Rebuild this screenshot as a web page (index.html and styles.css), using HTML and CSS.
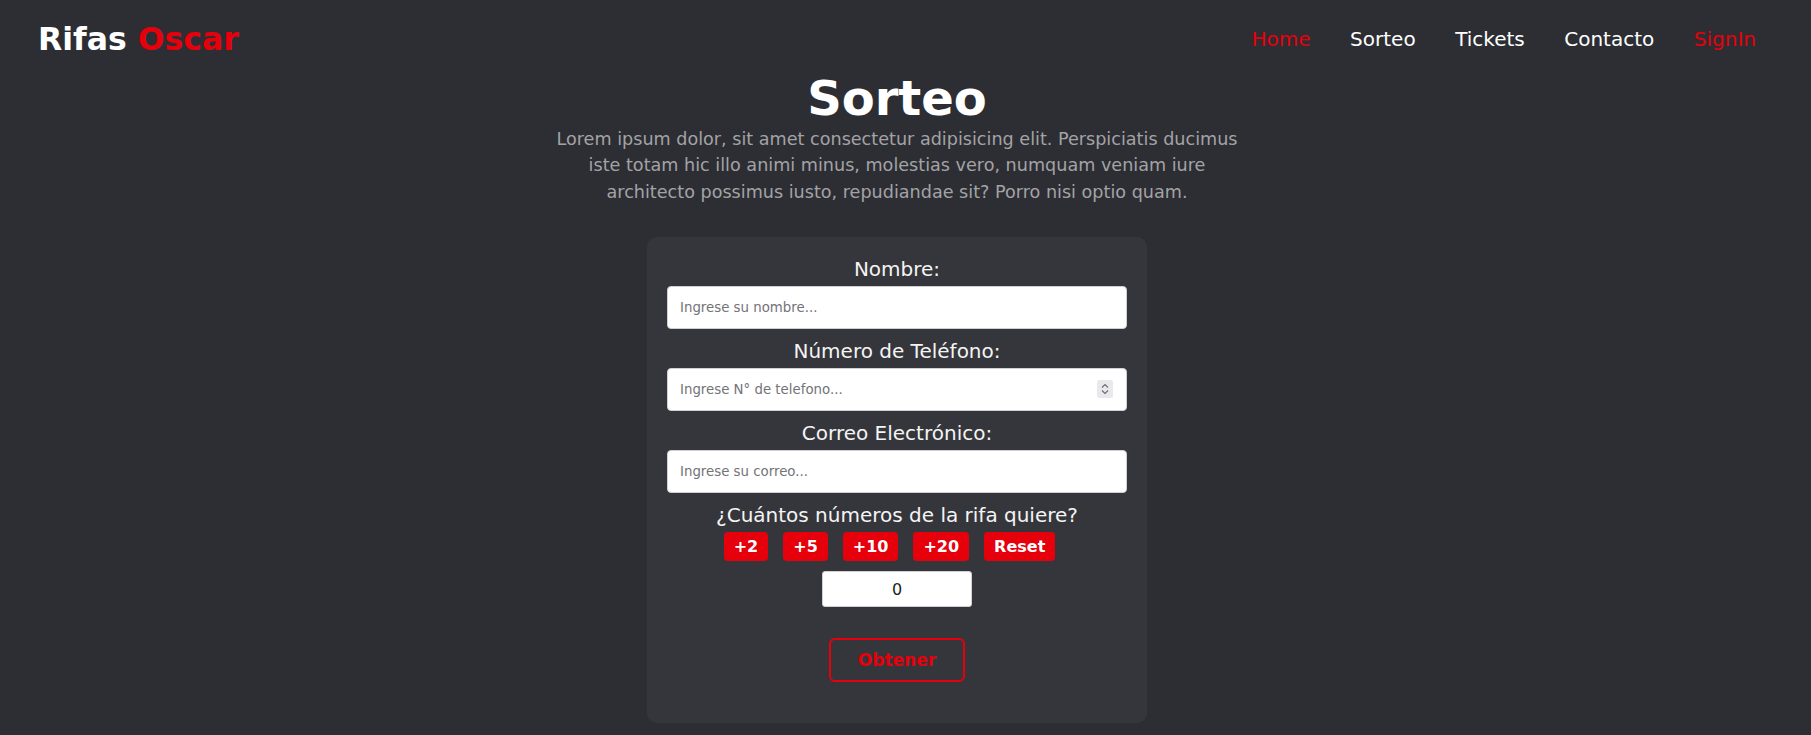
FILE: index.html
```html
<!DOCTYPE html>
<html lang="es">
<head>
<meta charset="utf-8">
<title>Rifas Oscar - Sorteo</title>
<link rel="stylesheet" href="styles.css">
</head>
<body>
<header class="topbar">
  <div class="logo">Rifas <span class="red">Oscar</span></div>
  <nav class="nav">
    <a class="nav-link active" href="#">Home</a>
    <a class="nav-link" href="#">Sorteo</a>
    <a class="nav-link" href="#">Tickets</a>
    <a class="nav-link" href="#">Contacto</a>
    <a class="nav-link active" href="#">SignIn</a>
  </nav>
</header>
<main class="main">
  <h1 class="title">Sorteo</h1>
  <p class="intro">Lorem ipsum dolor, sit amet consectetur adipisicing elit. Perspiciatis ducimus iste totam hic illo animi minus, molestias vero, numquam veniam iure architecto possimus iusto, repudiandae sit? Porro nisi optio quam.</p>
  <form class="card">
    <div class="field">
      <label class="label" for="nombre">Nombre:</label>
      <input class="input" id="nombre" type="text" placeholder="Ingrese su nombre...">
    </div>
    <div class="field">
      <label class="label" for="tel">Número de Teléfono:</label>
      <div class="input-wrap">
        <input class="input" id="tel" type="text" placeholder="Ingrese N° de telefono...">
        <span class="spinner"><svg width="16" height="18" viewBox="0 0 16 18"><path d="M5 7.5 L8 4.5 L11 7.5" fill="none" stroke="#6b6b73" stroke-width="1.1"/><path d="M5 10.5 L8 13.5 L11 10.5" fill="none" stroke="#6b6b73" stroke-width="1.1"/></svg></span>
      </div>
    </div>
    <div class="field">
      <label class="label" for="correo">Correo Electrónico:</label>
      <input class="input" id="correo" type="text" placeholder="Ingrese su correo...">
    </div>
    <div class="field">
      <div class="label">¿Cuántos números de la rifa quiere?</div>
      <div class="btn-row">
        <button type="button" class="btn-add">+2</button>
        <button type="button" class="btn-add">+5</button>
        <button type="button" class="btn-add">+10</button>
        <button type="button" class="btn-add">+20</button>
        <button type="button" class="btn-add">Reset</button>
      </div>
      <input class="count" type="text" value="0">
    </div>
    <button type="button" class="btn-get">Obtener</button>
  </form>
</main>
</body>
</html>
```
FILE: styles.css
```css
* { box-sizing: border-box; }
html, body {
  margin: 0;
  background: #2d2e33;
  font-family: "DejaVu Sans", Verdana, sans-serif;
  color: #ffffff;
}
.red { color: #e6000c; }
.topbar {
  display: flex;
  align-items: center;
  justify-content: space-between;
  padding: 21px 55px 0 38px;
}
.logo {
  font-size: 31.5px;
  font-weight: bold;
  color: #ffffff;
}
.nav {
  display: flex;
  gap: 39.5px;
}
.nav-link {
  font-size: 20px;
  color: #ffffff;
  text-decoration: none;
}
.nav-link.active { color: #e6000c; }
.main {
  display: flex;
  flex-direction: column;
  align-items: center;
  padding-right: 17px;
}
.title {
  margin: 13px 0 0;
  font-size: 48px;
  font-weight: bold;
  line-height: 56px;
}
.intro {
  margin: 0;
  max-width: 700px;
  text-align: center;
  font-size: 17.6px;
  line-height: 1.5;
  color: #a3a3a6;
}
.card {
  margin-top: 32px;
  width: 500px;
  background: #35363b;
  border-radius: 10px;
  padding: 21px 20px 41px;
  display: flex;
  flex-direction: column;
  align-items: center;
  gap: 11px;
}
.field {
  width: 100%;
  display: flex;
  flex-direction: column;
  align-items: center;
}
.label {
  font-size: 20px;
  line-height: 23px;
  color: #f4f4f4;
  margin-bottom: 5px;
}
.input-wrap {
  position: relative;
  width: 100%;
}
.input {
  width: 100%;
  height: 43px;
  border: 1px solid #d0d0d4;
  border-radius: 4px;
  background: #ffffff;
  padding: 0 12px;
  font-family: "DejaVu Sans", Verdana, sans-serif;
  font-size: 13.33px;
  color: #222;
}
.input::placeholder { color: #737378; }
.spinner {
  position: absolute;
  right: 14px;
  top: 12px;
  width: 16px;
  height: 18px;
  background: #e9e9ed;
  border-radius: 2px;
  display: flex;
}
.btn-row {
  display: flex;
  justify-content: center;
  margin-bottom: 10px;
}
.btn-add {
  margin-right: 15px;
  height: 29px;
  padding: 0 10px;
  border: none;
  border-radius: 4px;
  background: #e6000c;
  color: #ffffff;
  font-family: "DejaVu Sans", Verdana, sans-serif;
  font-weight: bold;
  font-size: 16px;
}
.count {
  width: 150px;
  height: 36px;
  border: 1px solid #d0d0d4;
  border-radius: 3px;
  background: #ffffff;
  text-align: center;
  font-family: "DejaVu Sans", Verdana, sans-serif;
  font-size: 16px;
  color: #1e1e1e;
}
.btn-get {
  margin-top: 20px;
  height: 44px;
  padding: 0 27px;
  background: transparent;
  border: 2px solid #e6000c;
  border-radius: 6px;
  color: #e6000c;
  font-family: "DejaVu Sans", Verdana, sans-serif;
  font-weight: bold;
  font-size: 17px;
}
```
